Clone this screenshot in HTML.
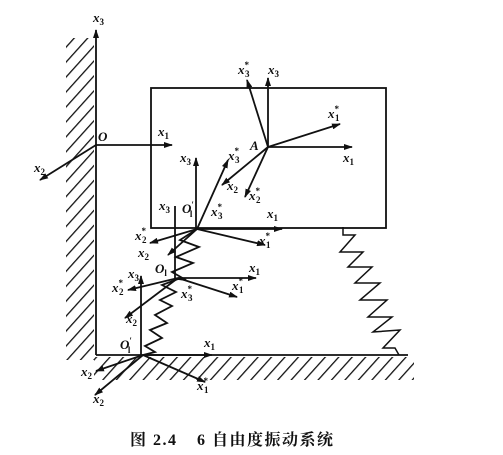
<!DOCTYPE html>
<html><head><meta charset="utf-8"><style>
html,body{margin:0;padding:0;background:#fff}
svg{display:block}
text{font-family:"Liberation Serif",serif;font-style:italic;font-weight:bold;font-size:13px;fill:#111}
.s{font-size:9px;font-style:normal}
.cap{font-family:"Liberation Serif","Noto Serif CJK SC",serif;font-style:normal;font-weight:bold;font-size:16px;letter-spacing:1.5px}
</style></head><body>
<svg width="503" height="455" viewBox="0 0 503 455" xmlns="http://www.w3.org/2000/svg">
<defs>
<pattern id="h" width="10" height="10" patternUnits="userSpaceOnUse" patternTransform="rotate(42)">
<line x1="0" y1="0" x2="0" y2="10" stroke="#111" stroke-width="2.6"/>
</pattern>
<marker id="a" markerWidth="9" markerHeight="6" refX="8" refY="3" orient="auto" markerUnits="userSpaceOnUse">
<path d="M0,0 L9,3 L0,6 Z" fill="#111"/>
</marker>
</defs>
<rect x="66" y="38" width="28" height="322" fill="url(#h)"/>
<rect x="94" y="357" width="320" height="23" fill="url(#h)"/>
<g stroke="#111" stroke-width="1.8" fill="none">
<line x1="96" y1="355" x2="96" y2="30" marker-end="url(#a)"/>
<line x1="96" y1="355" x2="408" y2="355"/>
<rect x="151" y="88" width="235" height="140"/>
<line x1="96" y1="145" x2="172" y2="145" marker-end="url(#a)"/>
<line x1="96" y1="145" x2="40" y2="180" marker-end="url(#a)"/>
<line x1="268" y1="147" x2="268" y2="78" marker-end="url(#a)"/>
<line x1="268" y1="147" x2="247" y2="80" marker-end="url(#a)"/>
<line x1="268" y1="147" x2="340" y2="124" marker-end="url(#a)"/>
<line x1="268" y1="147" x2="352" y2="147" marker-end="url(#a)"/>
<line x1="268" y1="147" x2="222" y2="185" marker-end="url(#a)"/>
<line x1="268" y1="147" x2="245" y2="197" marker-end="url(#a)"/>
<line x1="197" y1="229" x2="228" y2="160" marker-end="url(#a)"/>
<line x1="196" y1="229" x2="196" y2="158" marker-end="url(#a)"/>
<line x1="197" y1="229" x2="282" y2="229" marker-end="url(#a)"/>
<line x1="197" y1="229" x2="265" y2="245" marker-end="url(#a)"/>
<line x1="197" y1="229" x2="150" y2="243" marker-end="url(#a)"/>
<line x1="175" y1="280" x2="175" y2="206"/>
<line x1="197" y1="229" x2="168" y2="255" marker-end="url(#a)"/>
<line x1="178" y1="278" x2="256" y2="278" marker-end="url(#a)"/>
<line x1="178" y1="278" x2="237" y2="297" marker-end="url(#a)"/>
<line x1="178" y1="278" x2="128" y2="290" marker-end="url(#a)"/>
<line x1="178" y1="278" x2="125" y2="318" marker-end="url(#a)"/>
<line x1="141" y1="355" x2="141" y2="276" marker-end="url(#a)"/>
<line x1="143" y1="355" x2="212" y2="355" marker-end="url(#a)"/>
<line x1="143" y1="355" x2="205" y2="382" marker-end="url(#a)"/>
<line x1="143" y1="355" x2="95" y2="395" marker-end="url(#a)"/>
<line x1="143" y1="355" x2="96" y2="371" marker-end="url(#a)"/>
<polyline points="197,229 180,240 199,247 176,257 193,263 172,272 186,280 178,279 162,285 176,292 160,300 172,306 155,315 167,323 150,330 162,338 145,346 155,352 143,355"/>
<polyline stroke-width="1.5" points="343,227 343,235 355,235 340,252 363,252 348,267 372,267 355,283 380,283 360,300 387,300 368,317 392,317 373,332 400,330 383,348 395,348 399,355"/>
</g>
<text x="93" y="22">x<tspan class="s" dy="3">3</tspan></text>
<text x="98" y="141">O</text>
<text x="158" y="136">x<tspan class="s" dy="3">1</tspan></text>
<text x="34" y="172">x<tspan class="s" dy="3">2</tspan></text>
<text x="238" y="74">x<tspan class="s" dy="-6">*</tspan><tspan class="s" dx="-4" dy="9">3</tspan></text>
<text x="268" y="74">x<tspan class="s" dy="3">3</tspan></text>
<text x="328" y="118">x<tspan class="s" dy="-6">*</tspan><tspan class="s" dx="-4" dy="9">1</tspan></text>
<text x="250" y="150">A</text>
<text x="343" y="162">x<tspan class="s" dy="3">1</tspan></text>
<text x="227" y="190">x<tspan class="s" dy="3">2</tspan></text>
<text x="249" y="200">x<tspan class="s" dy="-6">*</tspan><tspan class="s" dx="-4" dy="9">2</tspan></text>
<text x="228" y="160">x<tspan class="s" dy="-6">*</tspan><tspan class="s" dx="-4" dy="9">3</tspan></text>
<text x="180" y="162">x<tspan class="s" dy="3">3</tspan></text>
<text x="159" y="210">x<tspan class="s" dy="3">3</tspan></text>
<text x="182" y="213">O<tspan class="s" dy="-5">′</tspan><tspan class="s" dx="-4" dy="9">l</tspan></text>
<text x="211" y="216">x<tspan class="s" dy="-6">*</tspan><tspan class="s" dx="-4" dy="9">3</tspan></text>
<text x="267" y="218">x<tspan class="s" dy="3">1</tspan></text>
<text x="259" y="245">x<tspan class="s" dy="-6">*</tspan><tspan class="s" dx="-4" dy="9">1</tspan></text>
<text x="135" y="240">x<tspan class="s" dy="-6">*</tspan><tspan class="s" dx="-4" dy="9">2</tspan></text>
<text x="138" y="257">x<tspan class="s" dy="3">2</tspan></text>
<text x="155" y="273">O<tspan class="s" dy="3">l</tspan></text>
<text x="249" y="272">x<tspan class="s" dy="3">1</tspan></text>
<text x="232" y="290">x<tspan class="s" dy="-6">*</tspan><tspan class="s" dx="-4" dy="9">1</tspan></text>
<text x="128" y="278">x<tspan class="s" dy="3">3</tspan></text>
<text x="112" y="292">x<tspan class="s" dy="-6">*</tspan><tspan class="s" dx="-4" dy="9">2</tspan></text>
<text x="181" y="298">x<tspan class="s" dy="-6">*</tspan><tspan class="s" dx="-4" dy="9">3</tspan></text>
<text x="126" y="323">x<tspan class="s" dy="3">2</tspan></text>
<text x="120" y="349">O<tspan class="s" dy="-5">′</tspan><tspan class="s" dx="-4" dy="9">l</tspan></text>
<text x="204" y="347">x<tspan class="s" dy="3">1</tspan></text>
<text x="197" y="390">x<tspan class="s" dy="-6">*</tspan><tspan class="s" dx="-4" dy="9">1</tspan></text>
<text x="81" y="376">x<tspan class="s" dy="3">2</tspan></text>
<text x="93" y="403">x<tspan class="s" dy="3">2</tspan></text>
<text class="cap" x="130" y="445">图 2.4 <tspan dx="14">6 自由度振动系统</tspan></text>
</svg>
</body></html>
